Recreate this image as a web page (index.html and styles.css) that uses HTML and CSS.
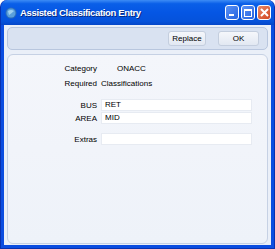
FILE: index.html
```html
<!DOCTYPE html>
<html lang="en">
<head>
    <meta charset="UTF-8">
    <title>Assisted Classification Entry</title>
    <link rel="stylesheet" href="styles.css">
</head>
<body>
    <div class="window">
        <div class="titlebar">
            <svg class="appicon" width="12" height="12" viewBox="0 0 12 12">
                <circle cx="6" cy="6" r="5.5" fill="#2f6fb8"/>
                <circle cx="6" cy="6" r="4.5" fill="#5aa0dc"/>
                <path d="M3 4 Q6 2 9 4 Q7 6 4 8 Z" fill="#9fd0f0"/>
            </svg>
            <span class="title">Assisted Classification Entry</span>
            <div class="winbtns">
                <span class="wb"><i class="min"></i></span>
                <span class="wb"><i class="max"></i></span>
                <span class="wb close">
                    <svg width="9" height="9" viewBox="0 0 9 9"><path d="M1 1 L8 8 M8 1 L1 8" stroke="#fff" stroke-width="2"/></svg>
                </span>
            </div>
        </div>
        <div class="client">
            <div class="toolbar">
                <button class="btn replace">Replace</button>
                <button class="btn ok">OK</button>
            </div>
            <div class="panel">
                <div class="row info">
                    <span class="label">Category</span>
                    <span class="val indent">ONACC</span>
                </div>
                <div class="row info">
                    <span class="label">Required</span>
                    <span class="val">Classifications</span>
                </div>
                <div class="row field gap">
                    <span class="label">BUS</span>
                    <span class="input">RET</span>
                </div>
                <div class="row field">
                    <span class="label">AREA</span>
                    <span class="input">MID</span>
                </div>
                <div class="row field gap2">
                    <span class="label">Extras</span>
                    <span class="input"></span>
                </div>
            </div>
        </div>
    </div>
</body>
</html>
```
FILE: styles.css
```css
*{
    margin:0;
    padding:0;
    box-sizing: border-box;
}
body{
    font-family: "Liberation Sans", Arial, sans-serif;
    font-size: 8px;
    color: #000;
}
.window{
    width: 275px;
    height: 249px;
    background: #0b4de0;
    border-radius: 7px 7px 0 0;
    display: flex;
    flex-direction: column;
    border-left: 1px solid #0831b0;
    border-right: 1px solid #0831b0;
    border-bottom: 1px solid #0831b0;
}
.titlebar{
    height: 25px;
    display: flex;
    align-items: center;
    padding-left: 4px;
    border-radius: 7px 7px 0 0;
    background: linear-gradient(#3d8cf5 0%, #0a5fe8 15%, #0556e4 50%, #0552db 85%, #0446c8 100%);
}
.appicon{
    margin-right: 3px;
}
.title{
    color: #fff;
    font-family: "Liberation Sans", Arial, sans-serif;
    font-weight: bold;
    font-size: 9.5px;
    letter-spacing: -0.35px;
    text-shadow: 1px 1px 0 #0a2a80;
}
.winbtns{
    margin-left: auto;
    margin-right: 3px;
    display: flex;
    gap: 2px;
}
.wb{
    width: 14px;
    height: 15px;
    border: 1px solid #fff;
    border-radius: 3px;
    background: linear-gradient(135deg, #5a92f5, #2663e0);
    display: flex;
    align-items: center;
    justify-content: center;
    position: relative;
}
.wb.close{
    background: linear-gradient(135deg, #e88a6a, #d2451f);
}
.min{
    width: 5px;
    height: 2px;
    background: #fff;
    position: absolute;
    left: 3px;
    bottom: 3px;
}
.max{
    width: 8px;
    height: 8px;
    border: 1px solid #fff;
    border-top-width: 2px;
}
.client{
    flex: 1;
    margin: 0 3px 3px 3px;
    background: #eaeff8;
    padding: 2px 3px 1px 3px;
    display: flex;
    flex-direction: column;
    gap: 4px;
}
.toolbar{
    height: 23px;
    border: 1px solid #b8c6de;
    border-radius: 5px;
    background: #d9e2f1;
    display: flex;
    justify-content: flex-end;
    align-items: center;
    padding-right: 8px;
    gap: 12px;
}
.btn{
    height: 15px;
    font-family: "Liberation Sans", Arial, sans-serif;
    font-size: 8px;
    border: 1px solid #c4cede;
    border-radius: 3px;
    background: linear-gradient(#f5f7fb, #e2e8f2);
    color: #000;
}
.replace{
    width: 38px;
}
.ok{
    width: 41px;
}
.panel{
    flex: 1;
    border: 1px solid #c6d1e4;
    border-radius: 6px;
    background: linear-gradient(#f4f6fb, #eef2f9);
    padding-top: 6px;
}
.row{
    display: flex;
    align-items: center;
}
.label{
    width: 93px;
    text-align: right;
    padding-right: 4px;
}
.info{
    height: 15px;
}
.val.indent{
    margin-left: 16px;
}
.field{
    height: 12px;
    margin-top: 1px;
}
.gap{
    margin-top: 8px;
}
.gap2{
    margin-top: 9px;
}
.input{
    width: 151px;
    height: 12px;
    background: #fff;
    border: 1px solid #e7ebf2;
    padding-left: 3px;
    line-height: 10px;
}
```
